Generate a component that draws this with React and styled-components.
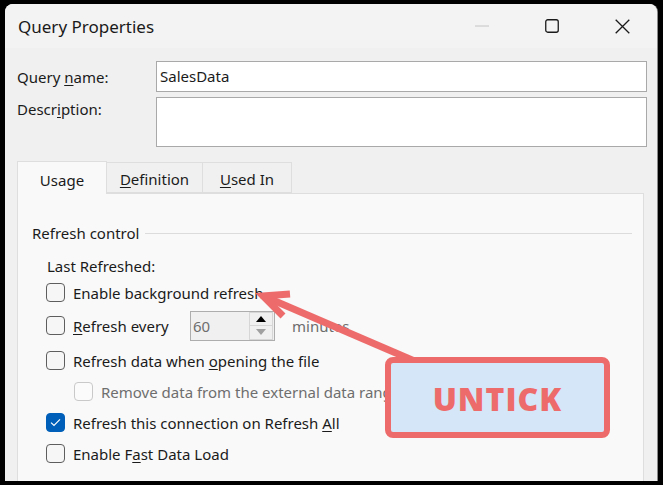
import styled, { createGlobalStyle } from "styled-components";

const GlobalStyle = createGlobalStyle`
  html, body {
    margin: 0;
    padding: 0;
    background: #000;
  }
  * {
    box-sizing: border-box;
  }
`;

const Stage = styled.div`
  position: relative;
  width: 663px;
  height: 485px;
  padding: 4px 6px 0 5px;
  background: #000;
  overflow: hidden;
  font-family: "Noto Sans", "Open Sans", sans-serif;
  font-size: 15px;
  color: #1b1b1b;
`;

const Window = styled.div`
  width: 652px;
  height: 477px;
  background: #f0f0f0;
  border-radius: 8px 8px 0 0;
  overflow: hidden;
  box-shadow: 1px 0 0 #8a8a8a;
  display: flex;
  flex-direction: column;
`;

const TitleBar = styled.div`
  height: 44px;
  flex-shrink: 0;
  display: flex;
  align-items: center;
  padding-left: 13px;
  background: #f3f3f3;
`;

const Title = styled.div`
  flex: 1;
  font-size: 17px;
  color: #1a1a1a;
`;

const ControlButton = styled.div`
  width: 70px;
  height: 44px;
  display: flex;
  align-items: center;
  justify-content: center;
`;

const Body = styled.div`
  padding: 13px 10px 0 12px;
  display: flex;
  flex-direction: column;
`;

const FieldRow = styled.div`
  display: grid;
  grid-template-columns: 139px 1fr;
  align-items: ${(p) => (p.$top ? "start" : "center")};
  margin-top: ${(p) => p.$gap || 0}px;
`;

const FieldLabel = styled.div`
  padding-top: ${(p) => (p.$top ? 2 : 0)}px;
`;

const TextBox = styled.div`
  height: ${(p) => p.$h}px;
  background: #fff;
  border: 1px solid #a9a9a9;
  padding: 3px 3px;
  line-height: 22px;
`;

const Key = styled.span`
  text-decoration: underline;
  text-underline-offset: 2px;
  text-decoration-thickness: 1px;
`;

const TabStrip = styled.div`
  margin-top: 14px;
  height: 32px;
  display: flex;
  align-items: flex-end;
  position: relative;
  z-index: 1;
`;

const Tab = styled.div`
  width: ${(p) => p.$w}px;
  height: ${(p) => (p.$active ? 33 : 31)}px;
  margin-bottom: ${(p) => (p.$active ? -1 : 0)}px;
  display: flex;
  align-items: center;
  justify-content: center;
  padding-top: ${(p) => (p.$active ? 3 : 2)}px;
  background: ${(p) => (p.$active ? "#f9f9f9" : "#f0f0f0")};
  border: 1px solid #dedede;
  border-bottom: ${(p) => (p.$active ? "none" : "1px solid #dedede")};
  border-left-width: ${(p) => (p.$first ? 1 : 0)}px;
`;

const Panel = styled.div`
  margin-right: 3px;
  height: 320px;
  background: #f9f9f9;
  border: 1px solid #dedede;
  padding: 0 11px 0 14px;
`;

const GroupHeader = styled.div`
  margin-top: 27px;
  height: 24px;
  display: flex;
  align-items: center;
  gap: 6px;
`;

const Rule = styled.div`
  flex: 1;
  height: 1px;
  background: #dcdcdc;
`;

const Group = styled.div`
  margin-top: 7px;
  padding-left: 14px;
  display: flex;
  flex-direction: column;
`;

const Row = styled.div`
  height: ${(p) => p.$h}px;
  display: flex;
  align-items: center;
  gap: 8px;
  padding-left: ${(p) => p.$indent || 0}px;
  color: ${(p) => (p.$disabled ? "#6e6e6e" : "inherit")};
  white-space: nowrap;
`;

const Text = styled.span`
  padding-left: 1px;
`;

const Box = styled.span`
  width: 19px;
  height: 19px;
  flex-shrink: 0;
  border-radius: 4px;
  display: flex;
  align-items: center;
  justify-content: center;
  border: 1px solid
    ${(p) => (p.$checked ? "#005fb8" : p.$disabled ? "#c9c9c9" : "#5e5e5e")};
  background: ${(p) => (p.$checked ? "#005fb8" : p.$disabled ? "#fbfbfb" : "#f6f6f6")};
`;

const EveryLabel = styled.span`
  width: 109px;
`;

const Spinner = styled.div`
  width: 85px;
  height: 30px;
  border: 1px solid #adadad;
  background: #f0f0f0;
  display: flex;
  align-items: center;
  padding-left: 2px;
  color: #6d6d6d;
`;

const SpinButtons = styled.div`
  margin-left: auto;
  margin-right: 1px;
  width: 24px;
  height: 28px;
  display: flex;
  flex-direction: column;
`;

const SpinButton = styled.div`
  flex: 1;
  display: flex;
  align-items: center;
  justify-content: center;
  border: 1px solid #d6d6d6;
  border-top-width: ${(p) => (p.$down ? 0 : 1)}px;
  background: #f0f0f0;
`;

const Units = styled.span`
  margin-left: 9px;
  color: #6d6d6d;
`;

const Arrow = styled.svg`
  position: absolute;
  left: 0;
  top: 0;
  pointer-events: none;
`;

const Callout = styled.div`
  position: absolute;
  left: 385px;
  top: 357px;
  width: 225px;
  height: 81px;
  border: 6px solid #ee6b6b;
  border-radius: 8px;
  background: #d4e6f7;
  display: flex;
  align-items: center;
  justify-content: center;
  font-family: "Open Sans", "Noto Sans", sans-serif;
  font-weight: 800;
  font-size: 32px;
  letter-spacing: 1px;
  color: #ee6b6b;
  padding-top: 2px;
`;

const Check = ({ checked, disabled }) => (
  <Box $checked={checked} $disabled={disabled}>
    {checked && (
      <svg width="11" height="9" viewBox="0 0 11 9">
        <path d="M1 4.6 L4 7.4 L10 1.4" fill="none" stroke="#fff" strokeWidth="1.2" />
      </svg>
    )}
  </Box>
);

export default function App() {
  return (
    <>
      <GlobalStyle />
      <Stage>
        <Window>
          <TitleBar>
            <Title>Query Properties</Title>
            <ControlButton>
              <svg width="14" height="2" viewBox="0 0 14 2">
                <line x1="0" y1="1" x2="14" y2="1" stroke="#c4c4c4" strokeWidth="1" />
              </svg>
            </ControlButton>
            <ControlButton>
              <svg width="14" height="14" viewBox="0 0 14 14">
                <rect x="0.75" y="0.75" width="12.5" height="12.5" rx="2" fill="none" stroke="#1a1a1a" strokeWidth="1.3" />
              </svg>
            </ControlButton>
            <ControlButton>
              <svg width="15" height="15" viewBox="0 0 15 15">
                <path d="M0.7 0.7 L14.3 14.3 M14.3 0.7 L0.7 14.3" stroke="#1a1a1a" strokeWidth="1.3" />
              </svg>
            </ControlButton>
          </TitleBar>
          <Body>
            <FieldRow>
              <FieldLabel>
                Query <Key>n</Key>ame:
              </FieldLabel>
              <TextBox $h={31}>SalesData</TextBox>
            </FieldRow>
            <FieldRow $top $gap={5}>
              <FieldLabel $top>
                Descr<Key>i</Key>ption:
              </FieldLabel>
              <TextBox $h={50} />
            </FieldRow>
            <TabStrip>
              <Tab $w={90} $active $first>
                Usage
              </Tab>
              <Tab $w={96}>
                <span>
                  <Key>D</Key>efinition
                </span>
              </Tab>
              <Tab $w={89}>
                <span>
                  <Key>U</Key>sed In
                </span>
              </Tab>
            </TabStrip>
            <Panel>
              <GroupHeader>
                <span>Refresh control</span>
                <Rule />
              </GroupHeader>
              <Group>
                <Row $h={27}>
                  <Text>Last Refreshed:</Text>
                </Row>
                <Row $h={27}>
                  <Check />
                  <span>Enable background refresh</span>
                </Row>
                <Row $h={39}>
                  <Check />
                  <EveryLabel>
                    <Key>R</Key>efresh every
                  </EveryLabel>
                  <Spinner>
                    60
                    <SpinButtons>
                      <SpinButton>
                        <svg width="10" height="6" viewBox="0 0 10 6">
                          <path d="M0 6 L5 0 L10 6 Z" fill="#000" />
                        </svg>
                      </SpinButton>
                      <SpinButton $down>
                        <svg width="10" height="6" viewBox="0 0 10 6">
                          <path d="M0 0 L10 0 L5 6 Z" fill="#a0a0a0" />
                        </svg>
                      </SpinButton>
                    </SpinButtons>
                  </Spinner>
                  <Units>minutes</Units>
                </Row>
                <Row $h={31}>
                  <Check />
                  <span>
                    Refresh data when <Key>o</Key>pening the file
                  </span>
                </Row>
                <Row $h={31} $indent={28} $disabled>
                  <Check disabled />
                  <span>Remove data from the external data range before saving</span>
                </Row>
                <Row $h={31}>
                  <Check checked />
                  <span>
                    Refresh this connection on Refresh <Key>A</Key>ll
                  </span>
                </Row>
                <Row $h={31}>
                  <Check />
                  <span>
                    Enable F<Key>a</Key>st Data Load
                  </span>
                </Row>
              </Group>
            </Panel>
          </Body>
        </Window>
        <Arrow width="663" height="485" viewBox="0 0 663 485">
          <line x1="268" y1="298" x2="440" y2="372" stroke="#ee6b6b" strokeWidth="7" />
          <polyline
            points="290,294 263,296 283,316"
            fill="none"
            stroke="#ee6b6b"
            strokeWidth="7"
            strokeLinejoin="miter"
          />
        </Arrow>
        <Callout>UNTICK</Callout>
      </Stage>
    </>
  );
}
